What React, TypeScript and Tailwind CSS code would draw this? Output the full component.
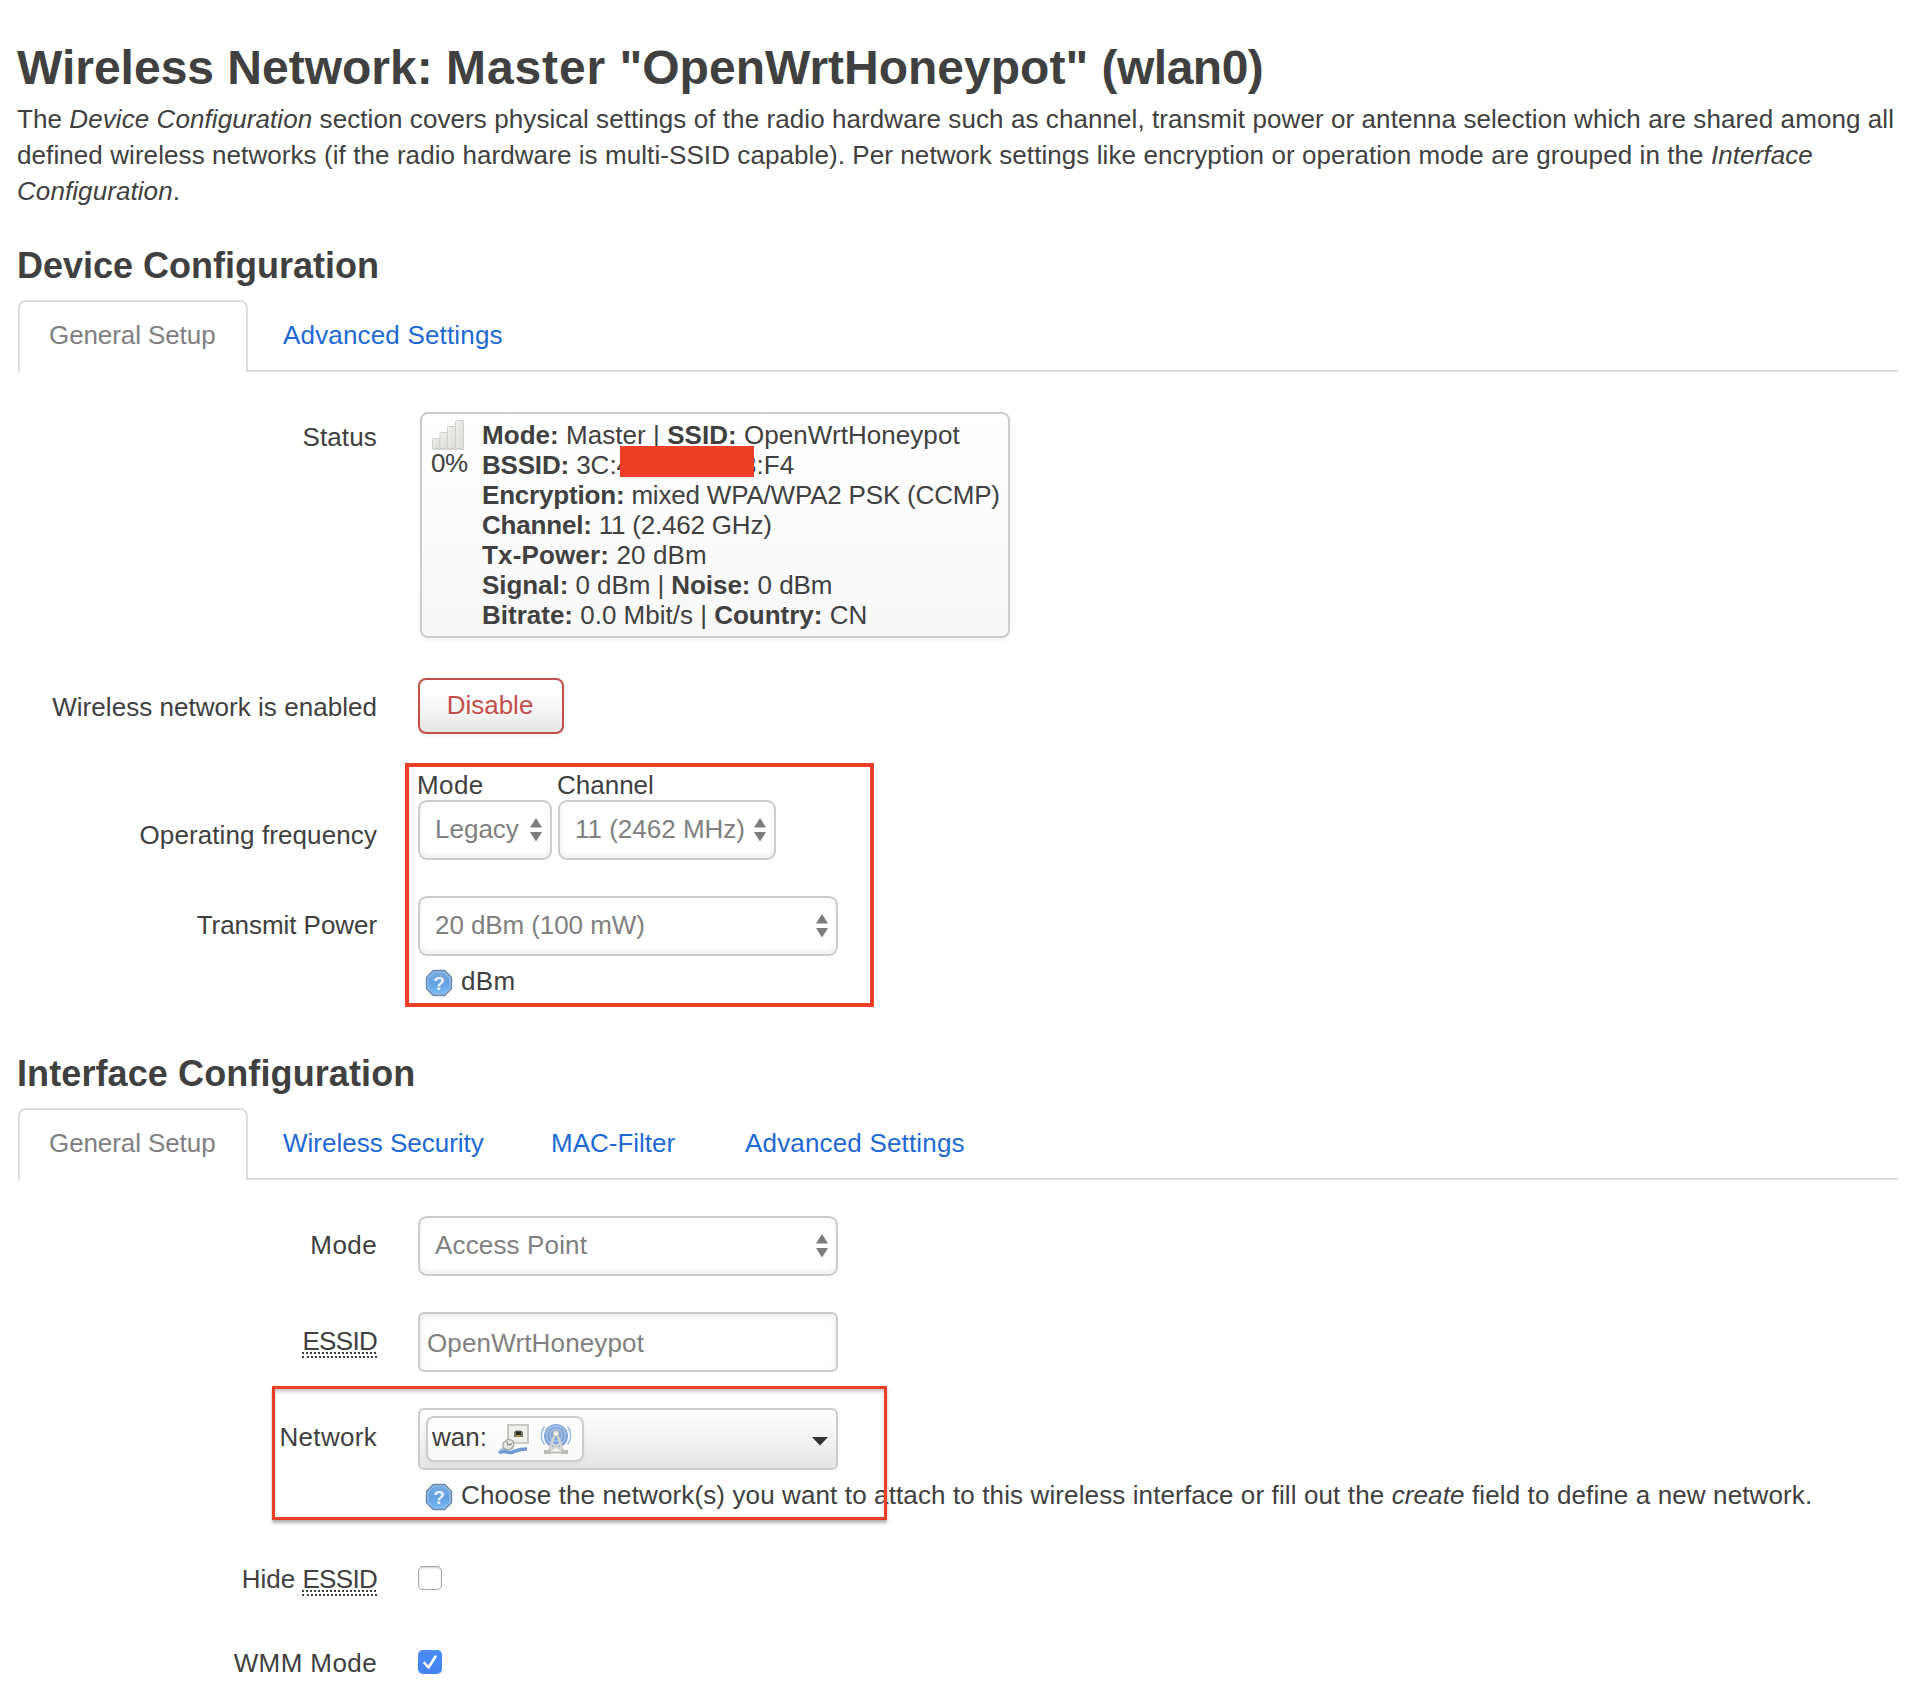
import React from "react";

function HelpIcon() {
  return (
    <svg width="28" height="28" viewBox="0 0 28 28" className="block shrink-0">
      <defs>
        <linearGradient id="help-fill" x1="0" y1="0" x2="0" y2="1">
          <stop offset="0" stopColor="#7aacdf" />
          <stop offset="0.5" stopColor="#62a0e2" />
          <stop offset="1" stopColor="#74b8f5" />
        </linearGradient>
      </defs>
      <path d="M8 .8h12L27.2 8v12L20 27.2H8L.8 20V8z" fill="#6f88a6" />
      <path d="M8.6 2.2h10.8L25.8 8.6v10.8l-6.4 6.4H8.6L2.2 19.4V8.6z" fill="#8dbdee" />
      <path d="M9 3.6h10L24.4 9v10L19 24.4H9L3.6 19V9z" fill="url(#help-fill)" />
      <text x="14" y="21" textAnchor="middle" fontFamily="Liberation Sans, sans-serif" fontWeight="700" fontSize="19" fill="#e6f2ff">?</text>
    </svg>
  );
}

function SignalIcon() {
  return (
    <svg width="32" height="32" viewBox="0 0 32 32" className="block">
      <defs>
        <linearGradient id="bar-fill" x1="0" y1="0" x2="1" y2="1">
          <stop offset="0" stopColor="#f0f0ee" />
          <stop offset="1" stopColor="#d9dbd6" />
        </linearGradient>
      </defs>
      <path d="M0 28.500h32v2.500H0z" fill="#d6d6d4" />
      <g fill="url(#bar-fill)" stroke="#cfd0cc" strokeWidth="1">
        <rect x="0.5" y="19.5" width="7.500" height="10" rx="1" />
        <rect x="8" y="13.5" width="7.500" height="16" rx="1" />
        <rect x="15.5" y="7.5" width="8" height="22" rx="1" />
        <rect x="23.5" y="1.5" width="8" height="28" rx="1" />
      </g>
    </svg>
  );
}

function EthernetIcon() {
  return (
    <svg width="32" height="32" viewBox="0 0 32 32" className="block">
      <rect x="10" y="1" width="20" height="18" fill="#efefeb" stroke="#c9c9c3" strokeWidth="2" />
      <path d="M16 13V8l2-1.500h5L25 8v5z" fill="#77776c" />
      <path d="M18 7.500h5V11h-5z" fill="#2b2b22" />
      <path d="M18.500 11h4v1.500h-4z" fill="#b89b3c" />
      <path d="M1 29c5-4 9 1 14-1s6-3 14-3" fill="none" stroke="#6f97d2" strokeWidth="3.600" />
      <path d="M2 26c5-1 9-1 13-2" fill="none" stroke="#9bb9e4" strokeWidth="2" />
      <path d="M5 19l5-4 5 2 1 5-5 4-6-2z" fill="#e6e6e2" stroke="#a9a9a4" strokeWidth="1.300" />
      <path d="M9 17.500l1 3.500 4-1" fill="none" stroke="#90908b" strokeWidth="1.300" />
    </svg>
  );
}

function WifiIcon() {
  return (
    <svg width="32" height="32" viewBox="0 0 32 32" className="block">
      <circle cx="16" cy="12" r="12" fill="#7fa5da" />
      <g fill="none" strokeWidth="1.300">
        <path d="M4.500 2.500a14.500 14.500 0 0 0 0 18M27.500 2.500a14.500 14.500 0 0 1 0 18" stroke="#9bb8e2" />
        <circle cx="16" cy="11.500" r="9.500" stroke="#a9c4ea" />
        <circle cx="16" cy="11" r="6" stroke="#a9c4ea" />
      </g>
      <path d="M14.500 11L9 27M17.500 11L23 27M12 20l9 6M20 20l-9 6" fill="none" stroke="#d4d4d0" strokeWidth="2.400" />
      <circle cx="16" cy="9.500" r="3" fill="#f0f0ed" stroke="#b0b0ac" />
      <path d="M4 26h7v4H4zM21 26h7v4h-7zM10 27.500h12v2H10z" fill="#bdbdb8" />
    </svg>
  );
}

function Arrows() {
  return (
    <svg width="12" height="24" viewBox="0 0 12 24" className="block shrink-0">
      <path d="M6 0l6 9.500H0zM6 23.500L0 14h12z" fill="#7b7b7b" />
    </svg>
  );
}

function Select({ text, className }: { text: string; className: string }) {
  return (
    <div className={`flex h-[60px] items-center justify-between rounded-[9px] border-2 border-[#ccc] bg-white pl-[15px] text-[#808080] shadow-[inset_0_-2px_6px_rgba(0,0,0,0.08)] ${className}`}>
      <span className="-mt-[2px] leading-9">{text}</span>
      <Arrows />
    </div>
  );
}

type Tab = { title: string; className: string };

function Tabs({ items }: { items: Tab[] }) {
  return (
    <div className="ml-px flex h-[72px] w-[1880px] border-b-2 border-[#ddd] text-[#1e69d2]">
      <div className="h-[72px] w-[230px] rounded-t-lg border-2 border-b-0 border-[#ddd] bg-white pt-[15px] pl-[29px] tracking-[-0.09px] text-[#808080]">
        General Setup
      </div>
      {items.map((item) => (
        <div key={item.title} className={`pt-[17px] pl-[35px] whitespace-nowrap ${item.className}`}>
          {item.title}
        </div>
      ))}
    </div>
  );
}

function Row({ label, labelClass, className, children }: { label: React.ReactNode; labelClass: string; className: string; children: React.ReactNode }) {
  return (
    <div className={`grid grid-cols-[360px_1fr] gap-x-[41px] ${className}`}>
      <div className={`text-right ${labelClass}`}>{label}</div>
      <div>{children}</div>
    </div>
  );
}

function Essid() {
  return (
    <span className="inline-block h-[35px] border-b-2 border-dotted border-[#404040] tracking-[-0.7px] underline decoration-dotted decoration-2 underline-offset-2">
      ESSID
    </span>
  );
}

export default function App() {
  return (
    <div className="h-[1690px] w-[1920px] overflow-hidden bg-white pt-[33px] pl-[17px] font-['Liberation_Sans',Arial,sans-serif] text-[26px] leading-9 text-[#404040]">
      <h1 className="h-[68px] text-[48px] leading-[69px] font-bold whitespace-nowrap">
        Wireless Network: <span className="tracking-[0.9px]">Master</span> "OpenWrtHoneypot" <span className="tracking-[-0.5px]">(wlan0)</span>
      </h1>
      <p className="tracking-[0.08px] whitespace-nowrap">
        The <em>Device Configuration</em> section covers physical settings of the radio hardware such as channel, transmit power or antenna selection which are shared among all
        <br />
        defined wireless networks (if the radio hardware is multi-SSID capable). Per network settings like encryption or operation mode are grouped in the <em>Interface</em>
        <br />
        <em>Configuration</em>.
      </p>

      <h2 className="mt-5 h-[71px] text-[36px] leading-[73px] font-bold">Device Configuration</h2>
      <Tabs items={[{ title: "Advanced Settings", className: "tracking-[0.17px]" }]} />

      <Row label="Status" labelClass="pt-[7px] tracking-[0.15px]" className="mt-10 h-[226px]">
        <div className="ml-[2px] flex h-[226px] w-[590px] rounded-lg border-2 border-[#ccc] bg-linear-to-b from-white to-[#f8f8f8] pt-[6px] pl-[10px] leading-[30px] whitespace-nowrap shadow-[0_2px_4px_rgba(0,0,0,0.06)]">
          <div className="-mt-px w-[50px] tracking-[-0.5px]">
            <SignalIcon />
            <div className="-mt-[3px] -ml-px">0%</div>
          </div>
          <div>
            <div className="tracking-[0.05px]"><b>Mode:</b> Master | <b>SSID:</b> OpenWrtHoneypot</div>
            <div className="relative">
              <b className="tracking-[-0.2px]">BSSID:</b> 3C:4<span className="inline-block w-[111px]" />3:F4
              <span className="absolute top-[-4px] left-[138px] h-[31px] w-[134px] bg-[#ec3f25]" />
            </div>
            <div className="tracking-[-0.19px]"><b>Encryption:</b> mixed WPA/WPA2 PSK (CCMP)</div>
            <div className="tracking-[-0.2px]"><b>Channel:</b> 11 (2.462 GHz)</div>
            <div className="tracking-[0.15px]"><b>Tx-Power:</b> 20 dBm</div>
            <div className="tracking-[-0.06px]"><b>Signal:</b> 0 dBm | <b>Noise:</b> 0 dBm</div>
            <div><b>Bitrate:</b> 0.0 Mbit/s | <b>Country:</b> CN</div>
          </div>
        </div>
      </Row>

      <Row label="Wireless network is enabled" labelClass="pt-[11px] tracking-[0.04px]" className="mt-10 h-14">
        <button className="block h-14 w-[146px] rounded-lg border-2 border-[#c34f4b] bg-linear-to-b from-white from-25% to-[#e6e6e6] pr-[2px] pb-[2px] text-[#c34f4b] shadow-[0_2px_4px_rgba(0,0,0,0.05)] [text-shadow:0_2px_2px_rgba(255,255,255,0.75)]">
          Disable
        </button>
      </Row>

      <div className="relative mt-9 h-[267px]">
        <Row label="Operating frequency" labelClass="pt-[47px] tracking-[0.1px]" className="h-[90px]">
          <div className="flex gap-[6px] leading-[30px]">
            <div>
              <div className="-ml-px tracking-[0.4px]">Mode</div>
              <Select text="Legacy" className="w-[134px] pr-2" />
            </div>
            <div>
              <div className="-ml-px">Channel</div>
              <Select text="11 (2462 MHz)" className="w-[218px] pr-2" />
            </div>
          </div>
        </Row>
        <Row label="Transmit Power" labelClass="pt-[11px] tracking-[-0.06px]" className="mt-9">
          <Select text="20 dBm (100 mW)" className="w-[420px] pr-2 tracking-[-0.08px]" />
          <div className="mt-[7px] ml-[7px] flex gap-2">
            <div className="pt-[6px]"><HelpIcon /></div>
            <span className="tracking-[0.4px]">dBm</span>
          </div>
        </Row>
        <div className="absolute top-[-7px] left-[388px] h-[244px] w-[469px] border-4 border-[#ec3f25]" />
      </div>

      <h2 className="h-[71px] text-[36px] leading-[73px] font-bold tracking-[0.1px]">Interface Configuration</h2>
      <Tabs
        items={[
          { title: "Wireless Security", className: "w-[268px]" },
          { title: "MAC-Filter", className: "w-[194px]" },
          { title: "Advanced Settings", className: "tracking-[0.17px]" },
        ]}
      />

      <Row label="Mode" labelClass="pt-[11px] tracking-[0.4px]" className="mt-9 h-[60px]">
        <Select text="Access Point" className="w-[420px] pr-2 tracking-[0.15px]" />
      </Row>

      <Row label={<Essid />} labelClass="pt-[11px]" className="mt-9 h-[60px]">
        <div className="h-[60px] w-[420px] rounded-md border-2 border-[#ccc] pt-[11px] pl-[7px] tracking-[0.15px] text-[#808080] shadow-[inset_0_2px_6px_rgba(0,0,0,0.1)]">OpenWrtHoneypot</div>
      </Row>

      <div className="relative mt-9">
        <Row label="Network" labelClass="pt-[11px] tracking-[0.3px]" className="h-[112px]">
          <div className="flex h-[62px] w-[420px] items-center justify-between rounded-md border-2 border-[#ccc] bg-linear-to-b from-white to-[#e6e6e6] pr-2 pl-[6px]">
            <div className="flex h-[46px] w-[158px] rounded-lg border-2 border-[#ccc] bg-linear-to-b from-white to-[#f8f8f8] pl-1 shadow-[0_2px_4px_rgba(0,0,0,0.06)]">
              <span className="w-[66px] pt-px">wan:</span>
              <div className="flex gap-[10px] pt-[6px]">
                <EthernetIcon />
                <WifiIcon />
              </div>
            </div>
            <svg width="16" height="9" viewBox="0 0 16 9" className="mt-1 block">
              <path d="M0 0h16L8 8.500z" fill="#333" />
            </svg>
          </div>
          <div className="mt-[7px] ml-[7px] flex gap-2 whitespace-nowrap">
            <div className="pt-[6px]"><HelpIcon /></div>
            <span className="tracking-[0.12px]">Choose the network(s) you want to attach to this wireless interface or fill out the <em>create</em> field to define a new network.</span>
          </div>
        </Row>
        <div className="absolute top-[-22px] left-[255px] h-[134px] w-[615px] border-3 border-[#ec3f25] shadow-[0_3px_3px_rgba(0,0,0,0.3),inset_0_3px_3px_rgba(0,0,0,0.2)]" />
      </div>

      <Row label={<>Hide <Essid /></>} labelClass="" className="mt-[41px] h-[36px]">
        <div className="mt-[5px] h-6 w-6 rounded-[5px] border border-[#a8a8a8] bg-white shadow-[inset_0_1px_2px_rgba(0,0,0,0.2)]" />
      </Row>

      <Row label="WMM Mode" labelClass="tracking-[0.4px]" className="mt-12 h-[36px]">
        <div className="mt-[5px] h-6 w-6 rounded-[5px] bg-linear-to-b from-[#4a8bf5] to-[#4383f2]">
          <svg width="24" height="24" viewBox="0 0 24 24" className="block">
            <path d="M6.500 13l4 4.500 7-11" fill="none" stroke="#fff" strokeWidth="2.600" strokeLinecap="round" strokeLinejoin="round" />
          </svg>
        </div>
      </Row>
    </div>
  );
}
